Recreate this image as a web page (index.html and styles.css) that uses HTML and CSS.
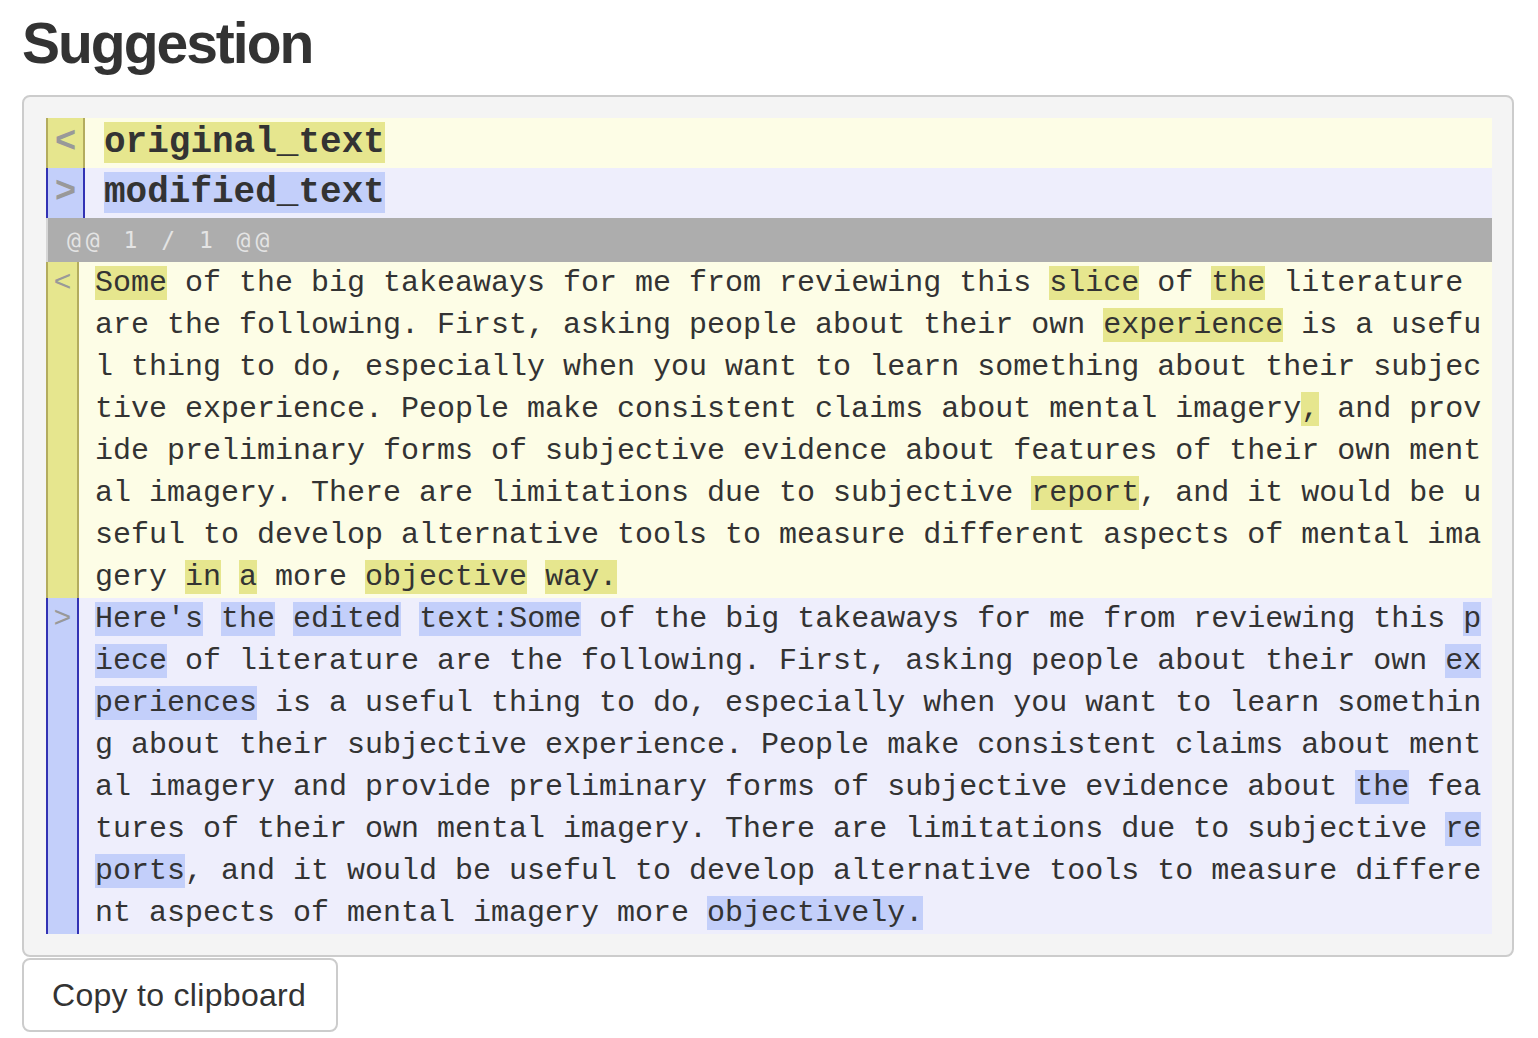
FILE: index.html
```html
<!DOCTYPE html>
<html lang="en">
<head>
<meta charset="utf-8">
<title>Suggestion</title>
<link rel="stylesheet" href="styles.css">
</head>
<body>
<h1 class="title">Suggestion</h1>
<div class="box">
  <div class="row del head">
    <div class="gutter">&lt;</div>
    <div class="text"><span class="hl">original_text</span></div>
  </div>
  <div class="row ins head">
    <div class="gutter">&gt;</div>
    <div class="text"><span class="hl">modified_text</span></div>
  </div>
  <div class="hunk">@@ 1 / 1 @@</div>
  <div class="row del body">
    <div class="gutter">&lt;</div>
    <div class="text"><span class="hl">Some</span> of the big takeaways for me from reviewing this <span class="hl">slice</span> of <span class="hl">the</span> literature are the following. First, asking people about their own <span class="hl">experience</span> is a useful thing to do, especially when you want to learn something about their subjective experience. People make consistent claims about mental imagery<span class="hl">,</span> and provide preliminary forms of subjective evidence about features of their own mental imagery. There are limitations due to subjective <span class="hl">report</span>, and it would be useful to develop alternative tools to measure different aspects of mental imagery <span class="hl">in</span> <span class="hl">a</span> more <span class="hl">objective</span> <span class="hl">way.</span></div>
  </div>
  <div class="row ins body">
    <div class="gutter">&gt;</div>
    <div class="text"><span class="hl">Here's</span> <span class="hl">the</span> <span class="hl">edited</span> <span class="hl">text:Some</span> of the big takeaways for me from reviewing this <span class="hl">piece</span> of literature are the following. First, asking people about their own <span class="hl">experiences</span> is a useful thing to do, especially when you want to learn something about their subjective experience. People make consistent claims about mental imagery and provide preliminary forms of subjective evidence about <span class="hl">the</span> features of their own mental imagery. There are limitations due to subjective <span class="hl">reports</span>, and it would be useful to develop alternative tools to measure different aspects of mental imagery more <span class="hl">objectively.</span></div>
  </div>
</div>
<button class="copy" type="button">Copy to clipboard</button>
</body>
</html>
```

FILE: styles.css
```css
html, body {
  background: #ffffff;
}

body {
  margin: 0;
  padding: 0 24px 0 22px;
  font-family: "Liberation Sans", Arial, sans-serif;
  color: #333333;
}

.title {
  font-size: 57px;
  font-weight: bold;
  letter-spacing: -2px;
  line-height: 64px;
  margin: 11px 0 20px;
  color: #333333;
}

.box {
  border: 2px solid #cccccc;
  border-radius: 8px;
  background: #f4f4f4;
  padding: 21px 20px 21px 22px;
}

.row {
  display: flex;
  align-items: stretch;
}

.row.del {
  background: #fdfde6;
}

.row.ins {
  background: #eeeefc;
}

.gutter {
  flex: none;
  text-align: center;
  color: #999999;
  font-family: "Liberation Mono", "Courier New", monospace;
}

.del .gutter {
  background: #e6e68e;
  border-left: 2px solid #b3ac5e;
  border-right: 2px solid #b3ac5e;
}

.ins .gutter {
  background: #c3cffa;
  border-left: 2px solid #3232b4;
  border-right: 2px solid #3232b4;
}

.text {
  flex: 1 1 auto;
  min-width: 0;
  font-family: "Liberation Mono", "Courier New", monospace;
  color: #333333;
}

.del .hl {
  background: #e6e68e;
}

.ins .hl {
  background: #c3cffa;
}

.head .gutter {
  width: 35px;
  font-size: 36px;
  line-height: 50px;
  font-weight: bold;
}

.head .text {
  font-size: 36px;
  line-height: 50px;
  font-weight: bold;
  padding-left: 19px;
}

.body .gutter {
  width: 29px;
  font-size: 30px;
  line-height: 42px;
}

.body .text {
  font-size: 30px;
  line-height: 42px;
  padding: 0 6px 0 16px;
  word-break: break-all;
}

.hunk {
  box-sizing: border-box;
  height: 44px;
  background: #adadad;
  color: #e4e4e4;
  border-left: 2px solid #d6d6d6;
  padding: 4px 0 0 19px;
  font-family: "DejaVu Sans Mono", monospace;
  font-size: 23px;
  line-height: 36px;
  letter-spacing: 5px;
}

.copy {
  display: block;
  box-sizing: border-box;
  margin-top: 1px;
  width: 316px;
  height: 74px;
  padding: 0 0 0 28px;
  text-align: left;
  background: #ffffff;
  border: 2px solid #cccccc;
  border-radius: 8px;
  font-family: "Liberation Sans", Arial, sans-serif;
  font-size: 32px;
  letter-spacing: 0.3px;
  line-height: 70px;
  color: #333333;
  -webkit-appearance: none;
  appearance: none;
}
```
